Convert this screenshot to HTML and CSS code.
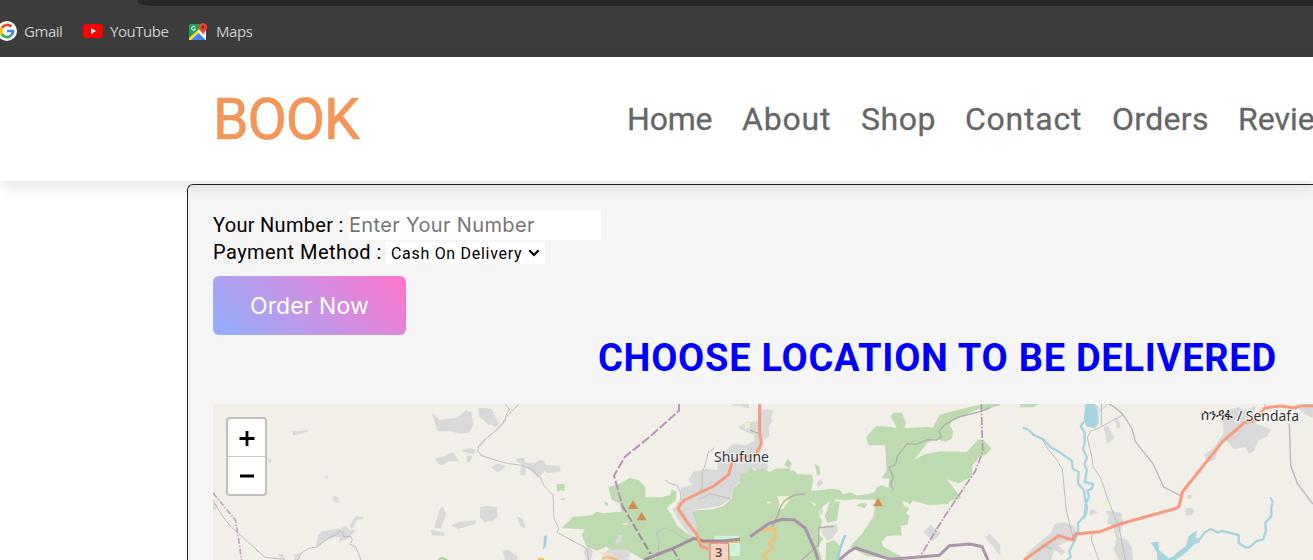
FILE: index.html
```html
<!DOCTYPE html>
<html lang="en">
<head>
<meta charset="utf-8">
<title>Book</title>
<link rel="stylesheet" href="styles.css">
</head>
<body>
<div class="browser">
  <div class="address-edge"></div>
  <div class="bookmarks">
    <span class="bookmark gmail">
      <svg width="20" height="20" viewBox="0 0 20 20"><circle cx="10" cy="10" r="10" fill="#fff"/><g fill="none" stroke-width="2.700"><path d="M4.900 6.800A6 6 0 0 1 14.300 5.800" stroke="#ea4335"/><path d="M4.900 13.200A6 6 0 0 1 4.900 6.800" stroke="#fbbc05"/><path d="M14 14.500A6 6 0 0 1 4.900 13.200" stroke="#34a853"/><path d="M10 10h6A6 6 0 0 1 14 14.500" stroke="#4285f4"/></g></svg>
      <span class="bm-text">Gmail</span>
    </span>
    <span class="bookmark youtube">
      <svg width="20" height="14" viewBox="0 0 20 14"><rect width="20" height="14" rx="3.500" fill="#f00"/><path d="M8 4l5 3-5 3z" fill="#fff"/></svg>
      <span class="bm-text">YouTube</span>
    </span>
    <span class="bookmark maps">
      <svg width="19" height="19" viewBox="0 0 19 19"><path d="M1.500 2H17v16H1.500z" fill="#e8e8e8"/><path d="M0 3.500Q0 2 1.500 2H12v4L0 17z" fill="#1e9e58"/><path d="M1 18l8-8 8 8z" fill="#4285f4"/><path d="M0 16L11 6l2 2L2 18H0z" fill="#fdd835"/><path d="M9 10l8 8v-4l-6-6z" fill="#fff"/><path d="M6.300 5.200A2 2 0 1 0 6.500 7H4.700" fill="none" stroke="#fff" stroke-width="1"/><path d="M14 1a4.200 4.200 0 0 0-4.200 4.200c0 3 3.500 4 4.200 8 .7-4 4.200-5 4.200-8A4.200 4.200 0 0 0 14 1z" fill="#e84335"/><circle cx="14" cy="5" r="1.500" fill="#8e2018"/></svg>
      <span class="bm-text">Maps</span>
    </span>
  </div>
</div>
<header class="header">
  <div class="logo">BOOK</div>
  <nav class="nav">
    <a class="n-home">Home</a><a class="n-about">About</a><a class="n-shop">Shop</a><a class="n-contact">Contact</a><a class="n-orders">Orders</a><a class="n-reviews">Reviews</a>
  </nav>
</header>
<main class="panel">
  <div class="row number-row"><label class="number-label">Your Number :</label><input class="number" type="text" placeholder="Enter Your Number"></div>
  <div class="row pay-row"><label class="pay-label">Payment Method :</label>
    <div class="select"><span>Cash On Delivery</span><svg width="12" height="8" viewBox="0 0 12 8"><path d="M1.300 1.300L6 6l4.700-4.700" fill="none" stroke="#000" stroke-width="2.200"/></svg></div>
  </div>
  <button class="order"><span>Order Now</span></button>
  <h1 class="title"><span>CHOOSE LOCATION TO BE DELIVERED</span></h1>
  <div class="map">
    <svg class="tiles" width="1100" height="156" viewBox="213 404 1100 156">
      <rect x="213" y="404" width="1100" height="156" fill="#f2efe9"/>
      <g transform="translate(205 395) scale(.33333)">
        <g fill="#d9d9d9">
          <path d="M679 52l26 22 50-6 28-22 16 6 6 34-13 27-25 4-30-8-39-1zM820 38l40 4 22 45-12 10-24-20-24-12zM690 192l30-10 22-12 12 15 8 14-32 0-15 11-15-2zM770 167l20-7 20 3 1 11-20 2zM785 184l20-4-10 20-11 3zM262 107l25 2 22-7-3 8-24 8-18 4zM712 333l12 25-16 42-20-2 14-50zM677 404l42 9-2 10-36-2zM738 391l22-10 50-5 5 7-21 9-34 10zM334 455l4-34 14-13 44-7 12 0 14-9 12 13 16 0-2 6-20 20-28 10 6-14-14-2-32 12-26 20zM436 402l0-14 16-25 22 2 4 6-22 4-10 22zM386 302l12 4 4 14-8 4-8-9zM190 190l10 8-6 9-5-6zM360 238l10 8-5 5zM219 478l16 0 3 17-12-8zM24 322l14 8-6 15-8-3zM268 478l18-3-4 20h-15z"/>
        </g>
        <g fill="none" stroke="#bcbcbf" stroke-width="3">
          <path d="M24 315Q60 385 100 415L180 487 240 493M280 495l8-20 24-15 24-4 36-28 22-8 10-14 8 6 5 14 20-2 5 10-7 14 17 8 16 38M840 132l-18 20-4 17 20 16"/>
        </g>
        <path d="M24 294L92 376 110 495" fill="none" stroke="#c3a5c1" stroke-width="5" stroke-dasharray="18 5 4 5"/>
        <path d="M700 493l12-4 14 6" stroke="#a9d59a" stroke-width="6" fill="none"/>
      </g>
      <g transform="translate(480 395) scale(.33333)">
        <path d="M0 40l20 0 12 25 12 8-16 20-13-14-15-10zM33 217l20-11 24 6-10 13-16 7zM111 190l22-2 2 15 30 1 13-9 14 3 6 12 40 3 4 18-40 3-8-5-20 20-20-22-16-10-2 25-16-2 4-32-14-8zM0 336l18-3 34 3 1 26-13 16-26 4-14-14zM111 363l18 10 8 28-16-8zM69 468l16-4 28 20-2 11H75zM756 28l50-4 2 16-28-6-24 0zM310 469l15-14 14 14-6 26h-14z" fill="#d9d9d9"/>
        <path d="M230 268l24-1-1 22-10-3-12 4zM242 312l14-3-2 5-12 2zM374 320l10 4 0 8-9-2z" fill="#bedab1"/>
      </g>
      <g transform="translate(560 400) scale(.33333)">
        <path d="M612 28L640 30 632 56 640 60 626 78 628 108 608 122 598 170 624 196 622 214 590 212 575 200 562 226 520 262 512 296 480 318 398 330 400 352 420 396 410 412 385 385 352 345 350 310 366 292 362 262 398 255 385 240 400 215 440 206 470 210 476 170 500 150 520 132 560 136 584 120 580 104 550 92 534 82 560 66 590 64 600 40z" fill="#d9d9d9"/>
        <path d="M145 262L182 250 210 233 236 240 256 262V292H305L330 284 335 268 350 276 348 300 320 324 335 345 350 375 380 400 412 412 410 380 396 332 460 328 490 318 515 295 520 265 560 228 570 197 582 212 610 208 620 220 650 206 690 205V480H250L200 450 155 455 140 440 110 452 80 440 65 405 75 388 5 385 40 350 95 346 110 335 130 340 185 335 178 310 155 300z" fill="#bedab1"/>
        <path d="M350 318l20 30 30 40 8 20-24-8-28-40-20-34zM165 426l12-21 10 0-3 21-14 8zM126 464l24-16 36 0 24 8-4 25h-56z" fill="#d9d9d9"/>
        <path d="M463 407h74l6 61-32 0-3-30-45-17z" fill="#cdf4d4"/>
      </g>
      <g transform="translate(480 395) scale(.33333)">
        <path d="M192 424l9-3-3 34-9 8z" fill="#a2cfdf"/>
        <g fill="none" stroke="#bfbfc1" stroke-width="3">
          <path d="M0 181L80 205 125 211 150 220 180 246 192 272 219 300 222 370 237 402 231 412 284 441 320 460 326 495M0 154q15-24 48-48 22-20 30-39L100 44l18-17M76 27l12 16-10 18-3 18-26 27M704 158l-20 16-8 35-10 22 0 48-14 20M555 255l15 10 22 6 10 22 0 22M656 313l34-17 60 15M500 476l36-3 0-42-8-14 12-10 20-9 22 12 36 24 15 7"/>
        </g>
        <path d="M597 27v20L510 125 435 185 402 242 427 332" fill="none" stroke="#b994b8" stroke-width="6" stroke-dasharray="28 7"/>
        <path d="M427 332L512 477M579 464l18 31" fill="none" stroke="#9e8c99" stroke-width="6" stroke-dasharray="24 8"/>
        <path d="M660 432l12 10 30-2 90-2 24-12" fill="none" stroke="#f2b777" stroke-width="10"/>
        <path d="M492 495l90-36 60-29 26 8 60 0 80-9 32-18" fill="none" stroke="#9e829d" stroke-width="9" opacity=".85"/>
        <path d="M839 27v90l5 30-16 30-70 20-12 42-44 34-88 42-12 12-8 14 30 44 26 32 12 36 24 9" fill="none" stroke="#f89a80" stroke-width="9" stroke-linejoin="round"/>
        <path d="M358 472l18 4 22 2" fill="none" stroke="#f8dfc0" stroke-width="6"/>
        <path d="M370 495v-7l22 0 22 7M174 493h18" fill="none" stroke="#f5bb67" stroke-width="6"/>
        <path d="M428 386l14-3 2 5-14 3zM792 87l18-5 1 15-14 6z" fill="#f0efcd"/>
        <path d="M459 316l15 26h-30zM485 350l15 26h-30z" fill="#d08f55"/>
        <rect x="690" y="444" width="56" height="60" rx="5" fill="#f5d2c6" stroke="#d49282" stroke-width="4"/>
      </g>
      <g transform="translate(740 400) scale(.33333)">
        <g fill="#bedab1">
          <path d="M90 217L105 206 125 206 135 215 160 210 172 222 215 224 220 240 213 272 250 270 270 266 300 270 310 284 330 276 350 286 385 283 405 275 410 262 425 256 445 264 448 236 424 234 440 212 436 136 386 136 378 112 408 78 450 80 470 84 462 66 452 50 458 38 486 38 498 70 494 84 570 80 578 84 598 44 700 18 740 12H780V16L740 28 716 26 636 64 628 76 640 94 636 116 616 126 590 116 560 128 550 145 520 182 550 164 600 154 680 156 715 118 732 122 754 146 736 166 720 168 698 196 694 232 656 250 620 238 664 294 630 302 624 312 568 316 520 302 510 312 488 302 492 318 508 324 498 340 508 348 502 374 482 378 486 406 440 408 425 426 430 440 485 470 490 480 380 468 330 440 368 398 400 350 410 300 340 298 300 302 290 362 262 368 254 350 270 304 250 318 236 346 246 362 244 382 232 400 250 416 240 430 236 446 246 480H0V222L70 206zM223 190L238 200 241 222 232 228zM133 196L143 176 155 190 150 203zM350 316L366 308 382 312 374 325zM258 430L282 420 302 440 300 480H256z"/>
        </g>
        <path d="M82 420L100 384 80 390 30 404 0 418V480H72L90 440z" fill="#bedab1"/>
        <path d="M242 382L262 376 290 372 294 390 278 414 262 422 248 404zM572 374L602 400 578 424 550 396zM735 410l16-7 30 32v32zM234 334L246 324 250 338 238 350zM230 250L242 236 250 250 236 262z" fill="#d9d9d9"/>
        <path d="M112 287l34 2 3 10-20 29-13-5 2-14zM80 305l14 0-3 7-10-2zM210 301l18 12-5 6zM284 298l28 1 0 5-28 1z" fill="#f1f0cf"/>
      </g>
      <g transform="translate(750 395) scale(.33333)">
        <path d="M166 297q-56 0-75 40-8 30-25 60M430 286l-8-20 8-22-13-26 20-10 5-25 30-38 26 3 34-14 28 1 15-10-9-15 20-22 40-22 64-16 30-11M155 495l50-45 2-52 45-4M0 105l24 10" fill="none" stroke="#aeb0a9" stroke-width="4"/>
        <path d="M262 495q6-36 24-75" fill="none" stroke="#a2cfdf" stroke-width="8"/>
        <path d="M20 410l30-6 24-5 3 30-17 15 6 18-24 15 5 18" fill="none" stroke="#f5bf76" stroke-width="8"/>
        <path d="M0 425L58 385 96 373 132 374 166 400 196 468 204 495M268 495l30-26 18-10 44 14 60 20 50-4 98-8 30-29 62-5 36 8 18 40" fill="none" stroke="#a58ca4" stroke-width="9" opacity=".9"/>
        <path d="M694 27L698 170 676 228 580 370 512 482" fill="none" stroke="#b493b5" stroke-width="5" stroke-dasharray="24 5 5 5"/>
        <path d="M384 308l15 26h-30z" fill="#d08f55"/>
        <path d="M824 495l16-13" stroke="#f89a80" stroke-width="9"/>
      </g>
      <g transform="translate(1020 395) scale(.33333)">
        <g fill="#d9d9d9">
          <path d="M606 64l20-18 30-10 24 10 26-14 0 54 28 9 20 9-14 22-24 9-15 34-14 8-12-20-34 5-24-28-24 30-8 30-24 8-8-22 30-24 28-42zM834 38l45-4v34l-20-8zM535 232l14-2-6 8zM502 300l14 0-2 12-14-3zM497 340l20-2 7 14-12 9-16-2zM209 347l10-4 14 9-16 9-10-3zM282 68l12 2 9 24-10 9zM250 95l14-2 20 37-23 16-4-24zM104 388l26-6 34 12 5 18-10 20-44 20 22 20-12 8-22-16-10 31-70 0-2-22 60-50 12-10zM255 347l22 0 28 8 5 34-10 22-4 15 26 8 14 24 3 37h-44l-14-32 8-30-10-40-18-10 5-20z"/>
        </g>
        <path d="M244 323l20-2 4 18-20 4z" fill="#eef0d2"/>
        <path d="M0 27h60l-20 10H0z" fill="#bedab1"/>
        <path d="M196 27h26l13 22 1 36-13 15-22-5-10-20zM410 470l-18-26 18 0 2 20 18 16 12 15h-30zM430 495l28-10 20-18 20-14 8-30 26-18-6 22 16 13-18 8-24 22-14 12-20 13z" fill="#a8d4e0"/>
        <g fill="none" stroke="#a8d4e0" stroke-width="7" stroke-linejoin="round">
          <path d="M8 97l18 8 14 14 30 14 20 22 34 20 32 23 2 23 18 10-2 34 18 22 4 30 5 20-3 20-24 28 0 24-8 24-18 36 4 16-10 10M192 80l-10 12 12 22 0 30-5 18 12 26-8 18 8 20-7 35 26 6-4 14-14 6 5 18-10 24-4 42M510 440l30-8 14-20 18-10 20 10 14-4 34 8 16 4 0 24 22 14 12-2 20-18 20-5 8-26-2-24 18-20 0-24 4-18-7-14M396 446l16-2 2 24 28 22M64 450l34 12"/>
        </g>
        <g fill="none" stroke="#bcbdbd" stroke-width="3">
          <path d="M65 130l20 34 22 26 20 33 12 124 20 80M309 60L240 97l-28 12-10 18 14 60 4 30 22 31 22 66 34 86 18 95M222 27l20 20 20-20M244 27v65M216 418l-2 16 22 61M735 27v8" />
        </g>
        <path d="M252 20Q298 38 320 75l15 24 12 42 52 65 32 70 50 25M808 86l4 125 20 54 47 62" fill="none" stroke="#b7b8bb" stroke-width="4"/>
        <path d="M12 495l104-73 42 13 8-18 74-7 60-23 172-48 6-6 9-42L608 140 674 82l32-5 28-38 50-6 38 6 24-7 33 0" fill="none" stroke="#f89a80" stroke-width="9" stroke-linejoin="round"/>
      </g>
      <g class="map-labels">
        <text x="714" y="462" textLength="55" lengthAdjust="spacingAndGlyphs">Shufune</text>
        <text class="ethiopic" x="1201" y="420" textLength="32" lengthAdjust="spacingAndGlyphs">ሰንዳፋ</text>
        <text x="1237" y="421" textLength="62" lengthAdjust="spacingAndGlyphs">/ Sendafa</text>
        <text class="shield" x="715" y="557">3</text>
      </g>
    </svg>
    <div class="zoom">
      <div class="zoom-button"><svg width="16" height="16" viewBox="0 0 16 16"><path d="M.5 8.500h15M8 1v15" stroke="#000" stroke-width="2.800"/></svg></div>
      <div class="zoom-button"><svg width="16" height="16" viewBox="0 0 16 16"><path d="M1 8h14" stroke="#000" stroke-width="3"/></svg></div>
    </div>
  </div>
</main>
</body>
</html>
```
FILE: styles.css
```css
* { box-sizing: border-box; }
body { margin: 0; width: 1313px; height: 560px; overflow: hidden; background: #fff; font-family: Roboto, "Liberation Sans", sans-serif; }
.browser { height: 57px; background: #3c3c3c; overflow: hidden; }
.address-edge { height: 6px; margin-left: 137px; background: #282828; border-bottom-left-radius: 14px 6px; }
.bookmarks { display: flex; height: 49px; align-items: center; margin-left: -3px; padding-top: 1px; }
.bookmark { display: flex; align-items: center; gap: 7px; color: #ccc; font: 15px/20px "Open Sans", "Noto Sans", sans-serif; }
.gmail { width: 86px; }
.youtube { width: 106px; }
.maps { gap: 8px; }
.bm-text { letter-spacing: -.45px; }
.header { position: relative; z-index: 1; display: flex; align-items: center; height: 124px; padding-left: 213px; background: #fff; box-shadow: 0 5px 16px rgba(0,0,0,.12); }
.logo { flex: none; width: 414px; color: #f39658; font-size: 57px; line-height: 68px; letter-spacing: -1px; padding-top: 2px; -webkit-text-stroke: .7px #f39658; }
.nav { display: flex; width: 686px; overflow: hidden; gap: 30px; color: #666; font-size: 32px; line-height: 40px; white-space: nowrap; -webkit-text-stroke: .3px #666; }
.nav a { flex: none; }
.n-home { width: 85px; letter-spacing: -.2px; }
.n-about { width: 89px; letter-spacing: .8px; }
.n-shop { width: 74px; letter-spacing: .5px; }
.n-contact { width: 117px; letter-spacing: .75px; }
.n-orders { width: 96px; letter-spacing: .3px; }
.panel { margin: 3px 0 0 187px; height: 376px; padding: 25px 0 0 25px; border: 1px solid #222; border-width: 1px 0 0 1px; border-radius: 6px 0 0 0; background: #f5f5f5; }
.row { display: flex; }
.number-row { height: 30px; align-items: center; }
.number-label { width: 136px; font-size: 20px; letter-spacing: .3px; white-space: nowrap; }
.number { width: 252px; height: 30px; padding: 0; border: 0; background: #fff; font: 20px Inter, sans-serif; letter-spacing: .35px; }
.number::placeholder { color: #757575; }
.pay-row { height: 24px; align-items: center; }
.pay-label { width: 173px; font-size: 20px; letter-spacing: .45px; white-space: nowrap; }
.select { display: flex; align-items: center; justify-content: space-between; width: 159px; height: 22px; padding: 0 5px; background: #fff; font-size: 16px; letter-spacing: .7px; white-space: nowrap; margin-top: 2px; }
.order { display: block; width: 193px; height: 59px; margin-top: 12px; padding: 0; border: 0; border-radius: 6px; background: linear-gradient(45deg, #90b0ff, #ff75cb); color: #fff; font: 23px Inter, sans-serif; letter-spacing: .1px; }
.title { margin: 0; padding: 1px 0 0 385px; color: #0000ff; font-size: 38px; line-height: 44px; font-weight: 700; letter-spacing: .73px; white-space: nowrap; }
.map { position: relative; width: 1100px; height: 156px; margin-top: 24px; }
.tiles { display: block; }
.map-labels { font: 14px "Noto Sans", sans-serif; fill: #333; stroke: #fff; stroke-opacity: .7; stroke-width: 2.5px; paint-order: stroke; }
.ethiopic { font-size: 16px; stroke-width: 1px; }
.shield { font-weight: 600; font-size: 13px; fill: #70483d; stroke: none; }
.zoom { position: absolute; left: 13px; top: 13px; width: 41px; height: 79px; border: 2px solid rgba(0,0,0,.2); border-radius: 4px; background: #fff; background-clip: padding-box; }
.zoom-button { display: flex; align-items: center; justify-content: center; height: 37px; }
.zoom-button + .zoom-button { border-top: 1px solid #ccc; height: 38px; }
```
